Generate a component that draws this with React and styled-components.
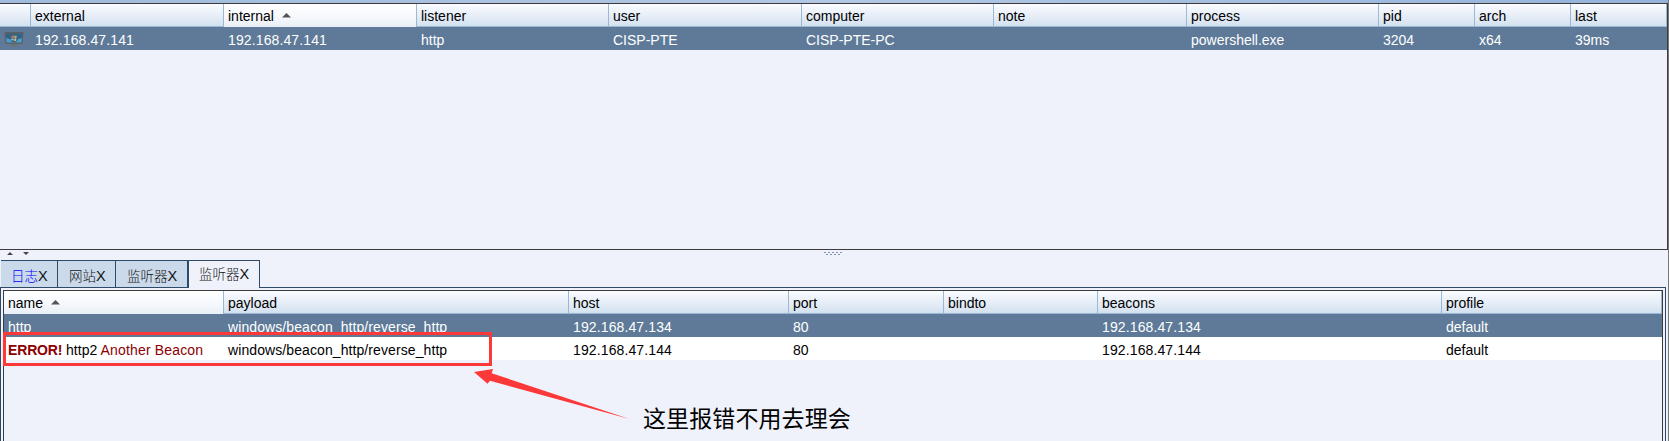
import React from "react";
import styled, { createGlobalStyle, css } from "styled-components";

const ink = "#3c3c3c";
const navy = "#2d4a68";
const line = "#9ab8d6";
const surface = "#eff2fb";

const GlobalStyle = createGlobalStyle`
  body { margin: 0; background: ${surface}; overflow: hidden; }
  * { box-sizing: border-box; }
`;

const Window = styled.main`
  position: relative;
  display: flex;
  flex-direction: column;
  width: 1669px;
  height: 441px;
  border-right: 1px solid #777;
  background: ${surface};
  font: 14px/22px "Liberation Sans", "Noto Sans CJK SC", sans-serif;
  color: #000;
`;

const TitleStrip = styled.div`
  flex: 0 0 3px;
  background: linear-gradient(90deg, #a0bbdb, #b2c8e4 50%, #94b3d9);
`;

const SessionsPane = styled.section`
  flex: 0 0 247px;
  border: solid ${ink};
  border-width: 1px 1px 1px 0;
`;

const TableRow = styled.div`
  display: grid;
  grid-template-columns: ${(p) => p.$columns};
  height: 23px;
  background: #fff;
  ${(p) => p.$selected && css`background: #5e7a98; color: #fff;`}
`;

const HeaderRow = styled(TableRow)`
  background: linear-gradient(#fafcff, #eaf0f9 45%, #d3e1ef);
  border-bottom: 1px solid ${line};
`;

const Cell = styled.div`
  padding: 2px 0 0 4px;
  white-space: pre;
  letter-spacing: ${(p) => p.$tracking || 0}px;
`;

const HeaderCell = styled(Cell)`
  display: flex;
  gap: 8px;
  padding-top: 1px;
  border-right: 1px solid ${line};
  ${(p) => p.$sorted && css`background: linear-gradient(#fff, #f6f8fd 55%, #e9eff7);`}
`;

const IconCell = styled.div`
  padding: 5px 0 0 4px;
  line-height: 0;
`;

const SortMark = styled.svg`
  margin-top: 8px;
`;

const Divider = styled.div`
  flex: 0 0 10px;
  display: flex;
  padding: 2px 0 0 7px;
`;

const Grip = styled.svg`
  margin-left: 793px;
`;

const TabBar = styled.nav`
  display: flex;
  align-items: flex-end;
  flex: 0 0 27px;
  padding-left: 1px;
`;

const Tab = styled.div`
  width: ${(p) => p.$width}px;
  height: 27px;
  padding: 4px 0 0 ${(p) => p.$inset}px;
  border: solid ${navy};
  border-width: 1px 1px 0 0;
  background: #cbdaea;
  color: #111;
  white-space: nowrap;
  font-size: 14.5px;
  ${(p) => p.$active && css`
    height: 28px;
    margin-bottom: -1px;
    padding-top: 2px;
    border-left-width: 1px;
    background: ${surface};
    position: relative;
  `}
`;

const TabLabel = styled.span`
  font-size: 13.5px;
  font-weight: 300;
  color: ${(p) => (p.$unread ? "#0000ff" : "inherit")};
`;

const TabPanel = styled.section`
  flex: 1;
  margin-right: 2px;
  padding: 2px 2px 0;
  border: solid ${navy};
  border-width: 1px 1px 0 1px;
`;

const ListenerTable = styled.div`
  height: 100%;
  border: solid ${ink};
  border-width: 1px 1px 0 1px;
`;

const ErrorText = styled.span`
  color: #8b0000;
  font-weight: ${(p) => (p.$strong ? 700 : 400)};
  letter-spacing: ${(p) => (p.$strong ? -0.15 : 0.17)}px;
`;

const Highlight = styled.div`
  position: absolute;
  left: 3px;
  top: 332px;
  width: 489px;
  height: 34px;
  border: 3px solid #fc3838;
`;

const Pointer = styled.svg`
  position: absolute;
  left: 470px;
  top: 366px;
`;

const Note = styled.div`
  position: absolute;
  left: 643px;
  top: 400px;
  font: 23px/34px "Noto Sans CJK SC", sans-serif;
  letter-spacing: 0.1px;
  white-space: nowrap;
`;

const sessionColumns = "31px 193px 193px 192px 193px 192px 193px 192px 96px 96px 96px";
const listenerColumns = "220px 345px 220px 155px 154px 344px 220px";

const sessionHeads = ["", "external", "internal", "listener", "user", "computer", "note", "process", "pid", "arch", "last"];
const session = ["192.168.47.141", "192.168.47.141", "http", "CISP-PTE", "CISP-PTE-PC", "", "powershell.exe", "3204", "x64", "39ms"];
const listenerHeads = ["name", "payload", "host", "port", "bindto", "beacons", "profile"];
const listeners = [
  { name: "http", payload: "windows/beacon_http/reverse_http", host: "192.168.47.134", port: "80", selected: true },
  { name: "http2", payload: "windows/beacon_http/reverse_http", host: "192.168.47.144", port: "80", failed: true },
];

const isAddress = (v) => /^\d+\./.test(v);

function SortArrow() {
  return (
    <SortMark width="9" height="5" viewBox="0 0 9 5">
      <path d="M4.5 0 9 4.5H0Z" fill="#555" />
    </SortMark>
  );
}

function Header({ columns, names, sorted }) {
  return (
    <HeaderRow $columns={columns}>
      {names.map((n) => (
        <HeaderCell key={n} $sorted={n === sorted}>
          {n}
          {n === sorted && <SortArrow />}
        </HeaderCell>
      ))}
    </HeaderRow>
  );
}

function MonitorIcon() {
  return (
    <svg width="20" height="15" viewBox="0 0 20 15">
      <path d="M0.5 0h19l-.8 12h-17.400Z" fill="#5d6064" />
      <path d="M2 1.5h16l-.5 8.500h-15Z" fill="#2f648c" />
      <path d="M2.200 6q7.800 3 15.600 0l-.3 4.500h-15Z" fill="#48a0c8" />
      <circle cx="10" cy="6" r="4.200" fill="#45617a" />
      <path d="M7.600 4q1.200-1 2.200-.4v2.200H7.200Z" fill="#c87a5c" />
      <path d="M10.400 3.600q1.200.6 2.300 0l-.4 2.300h-1.900Z" fill="#a3bd8c" />
      <path d="M7.200 6.400h2.500v2.200q-1.200-.6-2.500 0Z" fill="#86b9df" />
      <path d="M10.400 6.400h2l-.4 2.300q-.8.500-1.600 0Z" fill="#d9c684" />
      <path d="M5.500 12h9L11.500 15h-3Z" fill="#6d7278" />
    </svg>
  );
}

export default function App() {
  return (
    <Window>
      <GlobalStyle />
      <TitleStrip />
      <SessionsPane>
        <Header columns={sessionColumns} names={sessionHeads} sorted="internal" />
        <TableRow $columns={sessionColumns} $selected>
          <IconCell><MonitorIcon /></IconCell>
          {session.map((v, i) => <Cell key={i} $tracking={isAddress(v) ? 0.12 : 0}>{v}</Cell>)}
        </TableRow>
      </SessionsPane>
      <Divider>
        <svg width="24" height="4" viewBox="0 0 24 4">
          <path d="M3 0 6 3H0ZM16 0h6l-3 3Z" fill="#444" />
        </svg>
        <Grip width="18" height="3" viewBox="0 0 18 3" shapeRendering="crispEdges">
          {[0, 4, 8, 12, 16].map((x) => <rect key={x} x={x} width="2" height="1" fill="#8295b5" />)}
          {[2, 6, 10, 14].map((x) => <rect key={x} x={x} y="2" width="2" height="1" fill="#8295b5" />)}
        </Grip>
      </Divider>
      <TabBar>
        <Tab $width={57} $inset={10}><TabLabel $unread>日志</TabLabel>X</Tab>
        <Tab $width={58} $inset={11}><TabLabel>网站</TabLabel>X</Tab>
        <Tab $width={72} $inset={11}><TabLabel>监听器</TabLabel>X</Tab>
        <Tab $width={72} $inset={10} $active><TabLabel>监听器</TabLabel>X</Tab>
      </TabBar>
      <TabPanel>
        <ListenerTable>
          <Header columns={listenerColumns} names={listenerHeads} sorted="name" />
          {listeners.map((l) => (
            <TableRow key={l.name} $columns={listenerColumns} $selected={l.selected}>
              <Cell>
                {l.failed && <ErrorText $strong>ERROR! </ErrorText>}
                {l.name}
                {l.failed && <ErrorText> Another Beacon</ErrorText>}
              </Cell>
              <Cell $tracking={0.09}>{l.payload}</Cell>
              <Cell $tracking={0.12}>{l.host}</Cell>
              <Cell>{l.port}</Cell>
              <Cell />
              <Cell $tracking={0.12}>{l.host}</Cell>
              <Cell>default</Cell>
            </TableRow>
          ))}
        </ListenerTable>
      </TabPanel>
      <Highlight />
      <Pointer width="162" height="56" viewBox="470 366 162 56">
        <path d="M474 372 493 369 491.700 373.300 629.500 419 490 380.700 487.500 383.700Z" fill="#fc3838" />
      </Pointer>
      <Note>这里报错不用去理会</Note>
    </Window>
  );
}
